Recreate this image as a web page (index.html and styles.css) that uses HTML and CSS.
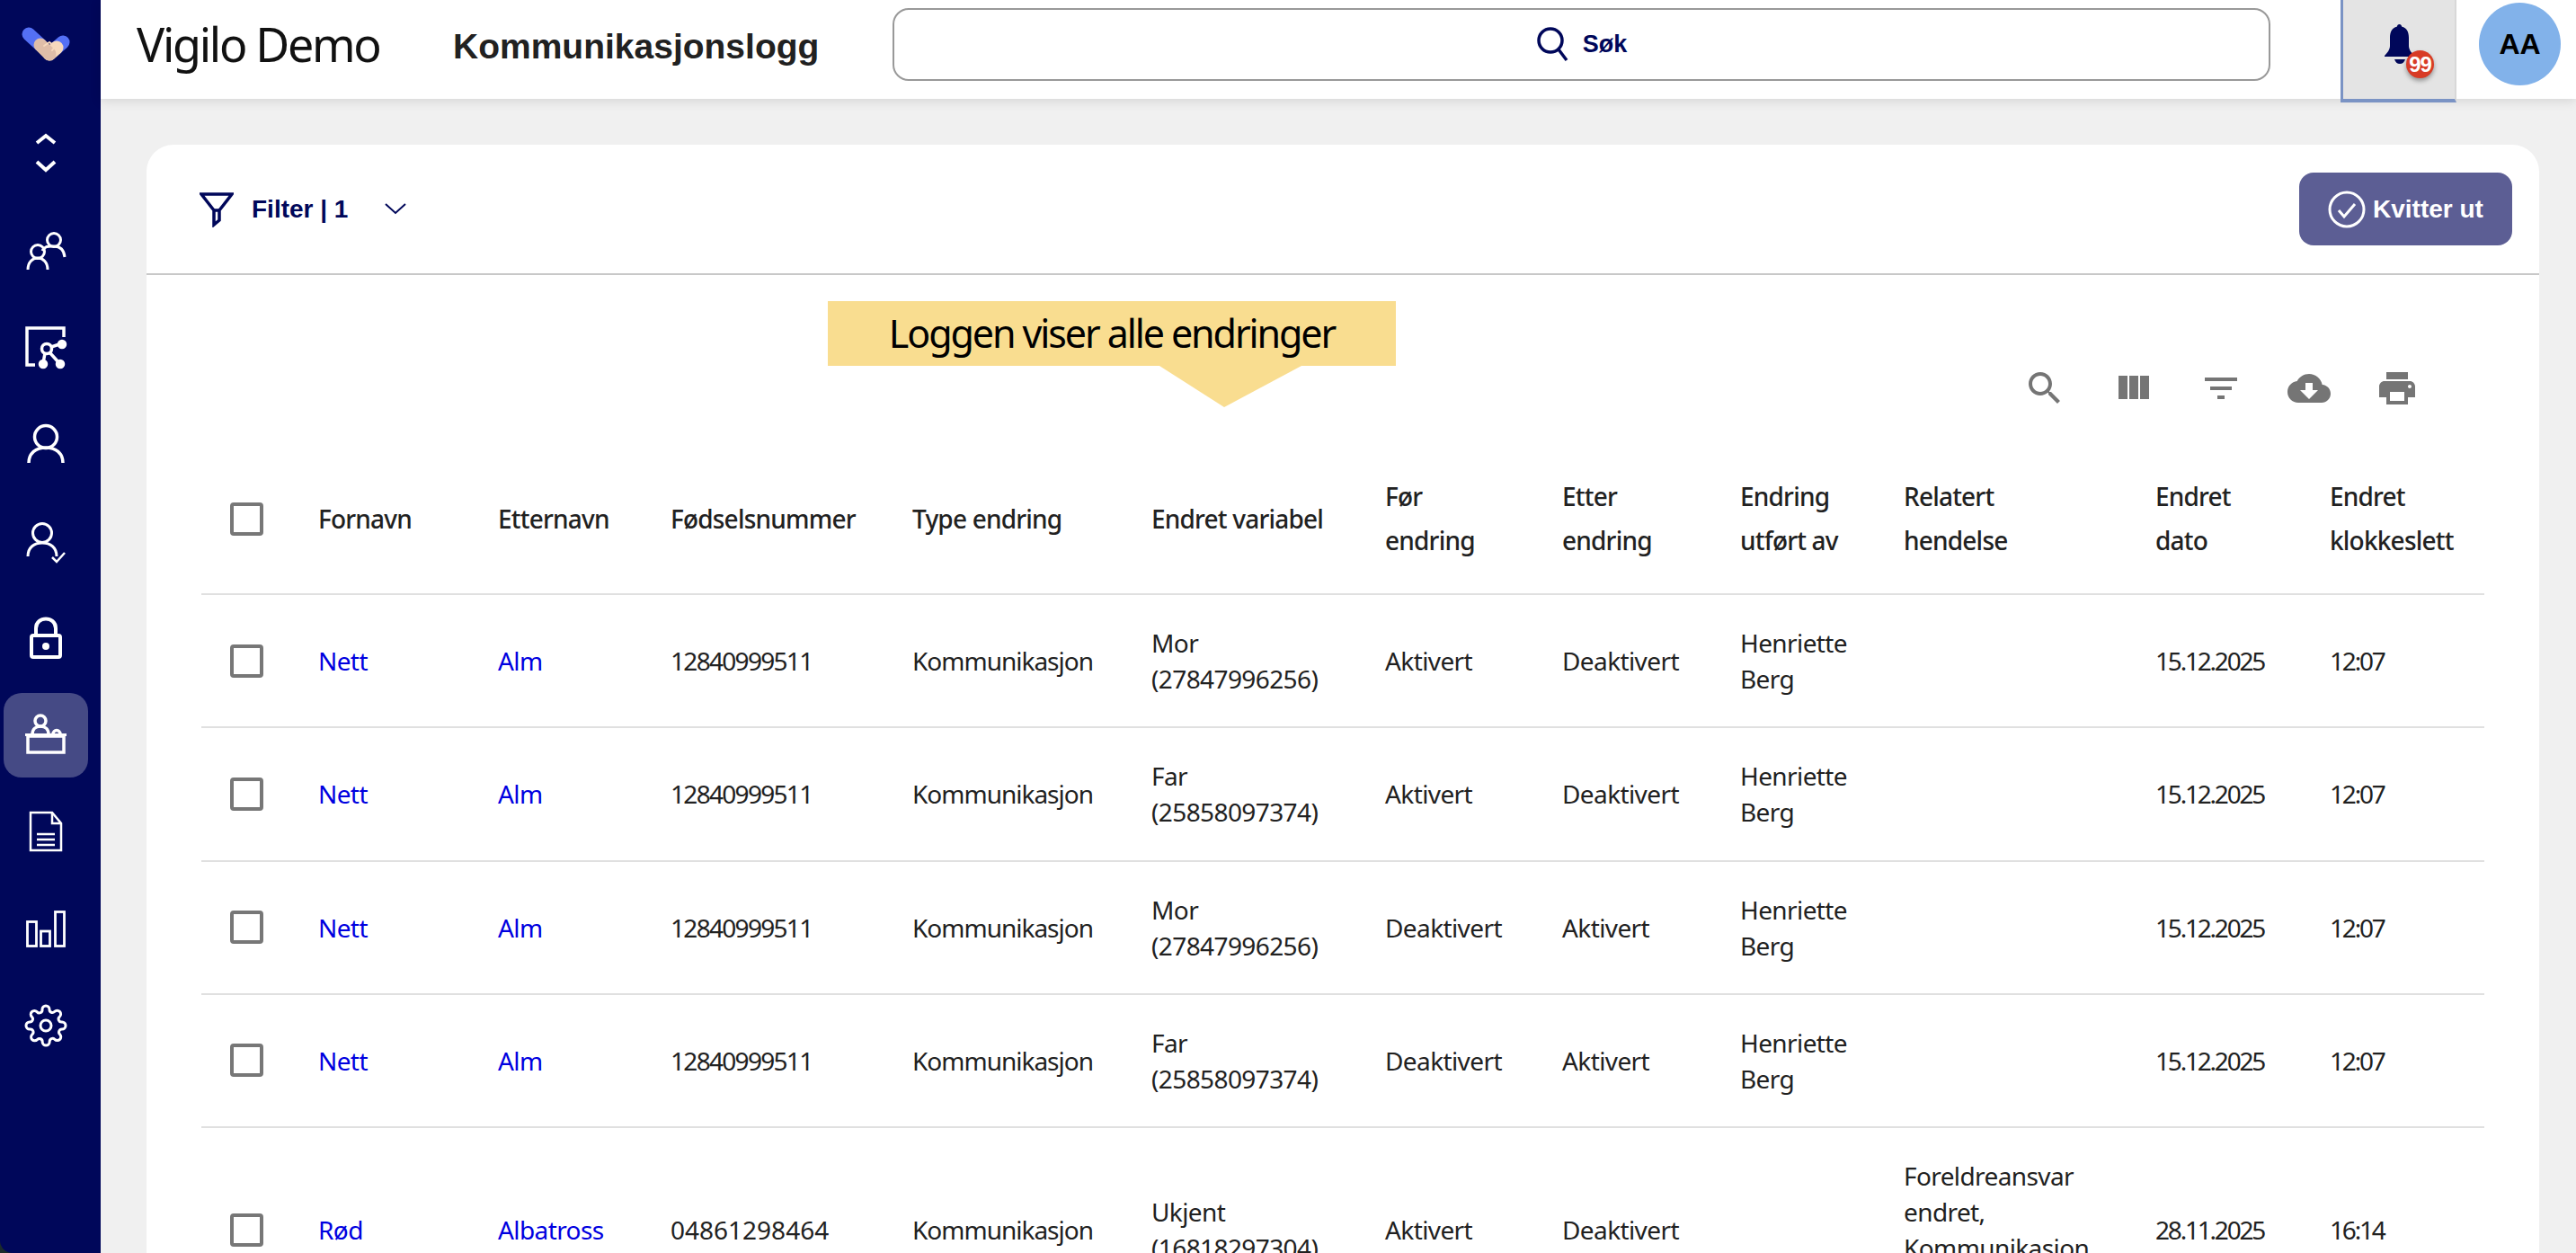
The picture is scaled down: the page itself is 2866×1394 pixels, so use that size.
FILE: index.html
```html
<!DOCTYPE html>
<html lang="en">
<head>
    <meta charset="UTF-8">
    <title>Kommunikasjonslogg</title>
    <link rel="stylesheet" href="styles.css">
</head>
<body>

<div class="app">
    <aside class="sidebar">
        <div class="logo">
            <svg width="58" height="44" viewBox="0 0 58 44" fill="none" stroke-linecap="round">
                <path d="M39 25L46 19" stroke="#5470f5" stroke-width="15"/>
                <path d="M31 32L39 25" stroke="#f7d9bd" stroke-width="15"/>
                <path d="M8 10L21 22" stroke="#5470f5" stroke-width="15"/>
                <path d="M21 22L31 32" stroke="#dfbda8" stroke-width="15"/>
                <path d="M25 23l6-4 6 5-3 4" stroke="#f7d9bd" stroke-width="2"/>
            </svg>
        </div>
        <nav class="nav">
            <div class="nav-item">
                <svg class="icon" viewBox="0 0 48 48" stroke-width="4"><path d="M14 11l10-8 10 8M14 32l10 9 10-9"/></svg>
            </div>
            <div class="nav-item">
                <svg class="icon" viewBox="0 0 48 48" stroke-width="3"><circle cx="33" cy="11" r="7.5"/><path d="M20 23c3-6 8-5 13-5s11 2 12 12"/><circle cx="15" cy="24" r="7.5"/><path d="M4 44c0-8 5-13 11-13s11 5 11 13"/></svg>
            </div>
            <div class="nav-item">
                <svg class="icon" viewBox="0 0 48 48" stroke-width="3.5"><path d="M12 43H3V2h41v10"/><circle cx="25" cy="25" r="5.500"/><path d="M30 23l12-4M29 30l10 11M23 30l-2 11"/><circle cx="42" cy="20" r="3.500" fill="#fff"/><circle cx="40" cy="42" r="3.500" fill="#fff"/><circle cx="21" cy="42" r="3.500" fill="#fff"/></svg>
            </div>
            <div class="nav-item">
                <svg class="icon" viewBox="0 0 48 48" stroke-width="3.5"><circle cx="24" cy="15" r="12.5"/><path d="M5 44c0-11 8-17 19-17s19 6 19 17"/></svg>
            </div>
            <div class="nav-item">
                <svg class="icon" viewBox="0 0 48 48" stroke-width="3"><circle cx="20" cy="14" r="10.5"/><path d="M4 40c0-10 7-15 16-15s16 5 16 15"/><path d="M31 41l5 5 9-10" stroke-width="2.500"/></svg>
            </div>
            <div class="nav-item">
                <svg class="icon" viewBox="0 0 48 48" stroke-width="4"><path d="M13 21v-8c0-14 22-14 22 0v8"/><rect x="8" y="21" width="32" height="24" rx="2"/><circle cx="24" cy="33" r="4" fill="#fff" stroke="none"/></svg>
            </div>
            <div class="nav-item nav-active">
                <svg class="icon" viewBox="0 0 48 48" stroke-width="3.5"><circle cx="18" cy="8" r="6"/><path d="M9 23c0-6 4-9 9-9s9 3 9 9M32 23c0-6 8-6 8 0"/><path d="M1 22h46v3H1z" fill="#fff" stroke="none"/><path d="M4 25h40v18H4z"/></svg>
            </div>
            <div class="nav-item">
                <svg class="icon" viewBox="0 0 48 48" stroke-width="2.500"><path d="M7 2h24l10 12v30H7z"/><path d="M31 2v12h10"/><path d="M14 26h20M14 32h20M14 38h20"/></svg>
            </div>
            <div class="nav-item">
                <svg class="icon" viewBox="0 0 48 48" stroke-width="2.800"><rect x="3.500" y="15.500" width="10" height="27"/><rect x="18.500" y="26" width="10" height="16.500"/><rect x="34.500" y="4.500" width="10" height="38"/></svg>
            </div>
            <div class="nav-item">
                <svg class="icon" viewBox="0 0 24 24" stroke-width="1.500"><circle cx="12" cy="12" r="3"/><path d="M19.4 15a1.65 1.65 0 0 0 .33 1.82l.06.06a2 2 0 1 1-2.83 2.83l-.06-.06a1.65 1.65 0 0 0-2.82 1.17V21a2 2 0 1 1-4 0v-.09a1.65 1.65 0 0 0-2.82-1.17l-.06.06a2 2 0 1 1-2.83-2.83l.06-.06A1.65 1.65 0 0 0 3.26 14H3a2 2 0 1 1 0-4h.09a1.65 1.65 0 0 0 1.17-2.82l-.06-.06a2 2 0 1 1 2.83-2.83l.06.06A1.65 1.65 0 0 0 10 3.09V3a2 2 0 1 1 4 0v.09a1.65 1.65 0 0 0 2.82 1.17l.06-.06a2 2 0 1 1 2.83 2.83l-.06.06A1.65 1.65 0 0 0 20.91 10H21a2 2 0 1 1 0 4h-.09a1.65 1.65 0 0 0-1.51 1z"/></svg>
            </div>
        </nav>
    </aside>

    <div class="main">
        <header class="topbar">
            <div class="brand">Vigilo Demo</div>
            <div class="page-title">Kommunikasjonslogg</div>
            <div class="search">
                <svg width="38" height="40" viewBox="0 0 38 40" fill="none" stroke="#00075a" stroke-width="3.5"><circle cx="16" cy="16" r="13"/><path d="M25 26l9 12"/></svg>
                <span>Søk</span>
            </div>
            <div class="bell-box">
                <svg width="33" height="45" viewBox="0 0 33 45" fill="#00075a"><path d="M16.500 0c1.500 0 2.500 1 2.500 2.500C25 4 27 9 27 15v9c0 4 3 8 6 11v1H0v-1c3-3 6-7 6-11v-9C6 9 8 4 14 2.500 14 1 15 0 16.500 0z"/><path d="M11 39h12c-1 3-3 5-6 5s-5-2-6-5z"/></svg>
                <span class="badge">99</span>
            </div>
            <div class="avatar">AA</div>
        </header>

        <div class="content">
            <section class="card">
                <div class="card-head">
                    <div class="filter">
                        <svg width="38" height="40" viewBox="0 0 38 40" fill="none" stroke="#00075a" stroke-width="3.500"><path d="M2 3h34L22 21v11l-6 5V21z"/><path d="M16 21h6"/></svg>
                        <span class="filter-label">Filter | 1</span>
                        <svg width="24" height="13" viewBox="0 0 24 13" fill="none" stroke="#00075a" stroke-width="2"><path d="M1 1l11 10L23 1"/></svg>
                    </div>
                    <button class="checkout">
                        <svg width="42" height="42" viewBox="0 0 42 42" fill="none" stroke="#fff" stroke-width="3"><circle cx="21" cy="21" r="19"/><path d="M12 22l6 7 12-14"/></svg>
                        Kvitter ut
                    </button>
                </div>

                <div class="tools">
                    <svg class="tool" viewBox="0 0 24 24"><path d="M15.5 14h-.79l-.28-.27C15.41 12.59 16 11.11 16 9.5 16 5.910 13.090 3 9.500 3S3 5.910 3 9.500 5.910 16 9.500 16c1.610 0 3.090-.59 4.230-1.570l.27.28v.79l5 4.990L20.490 19l-4.990-5zm-6 0C7.010 14 5 11.990 5 9.500S7.010 5 9.500 5 14 7.010 14 9.500 11.990 14 9.500 14z"/></svg>
                    <svg class="tool" viewBox="0 0 24 24"><path d="M10 18h5V5h-5v13zm-6 0h5V5H4v13zM16 5v13h5V5h-5z"/></svg>
                    <svg class="tool" viewBox="0 0 24 24"><path d="M10 18h4v-2h-4v2zM3 6v2h18V6H3zm3 7h12v-2H6v2z"/></svg>
                    <svg class="tool" viewBox="0 0 24 24"><path d="M19.350 10.040C18.670 6.590 15.640 4 12 4 9.110 4 6.600 5.640 5.350 8.040 2.340 8.360 0 10.910 0 14c0 3.310 2.690 6 6 6h13c2.760 0 5-2.240 5-5 0-2.640-2.050-4.780-4.650-4.960zM17 13l-5 5-5-5h3V9h4v4h3z"/></svg>
                    <svg class="tool" viewBox="0 0 24 24"><path d="M19 8H5c-1.660 0-3 1.340-3 3v6h4v4h12v-4h4v-6c0-1.660-1.340-3-3-3zm-3 11H8v-5h8v5zm3-7c-.55 0-1-.45-1-1s.45-1 1-1 1 .45 1 1-.45 1-1 1zm-1-9H6v4h12V3z"/></svg>
                </div>

                <table class="log">
                    <colgroup>
                        <col class="c-check"><col class="c-first"><col class="c-last"><col class="c-ssn"><col class="c-type"><col class="c-var"><col class="c-before"><col class="c-after"><col class="c-by"><col class="c-event"><col class="c-date"><col class="c-time">
                    </colgroup>
                    <thead>
                        <tr>
                            <th><span class="box"></span></th>
                            <th>Fornavn</th>
                            <th>Etternavn</th>
                            <th>Fødselsnummer</th>
                            <th>Type endring</th>
                            <th>Endret variabel</th>
                            <th>Før<br>endring</th>
                            <th>Etter<br>endring</th>
                            <th>Endring<br>utført av</th>
                            <th>Relatert<br>hendelse</th>
                            <th>Endret<br>dato</th>
                            <th>Endret<br>klokkeslett</th>
                        </tr>
                    </thead>
                    <tbody>
                        <tr>
                            <td><span class="box"></span></td>
                            <td><a href="#">Nett</a></td>
                            <td><a href="#">Alm</a></td>
                            <td class="tight">12840999511</td>
                            <td class="kind">Kommunikasjon</td>
                            <td>Mor<br>(27847996256)</td>
                            <td>Aktivert</td>
                            <td>Deaktivert</td>
                            <td>Henriette<br>Berg</td>
                            <td></td>
                            <td class="date">15.12.2025</td>
                            <td class="date">12:07</td>
                        </tr>
                        <tr>
                            <td><span class="box"></span></td>
                            <td><a href="#">Nett</a></td>
                            <td><a href="#">Alm</a></td>
                            <td class="tight">12840999511</td>
                            <td class="kind">Kommunikasjon</td>
                            <td>Far<br>(25858097374)</td>
                            <td>Aktivert</td>
                            <td>Deaktivert</td>
                            <td>Henriette<br>Berg</td>
                            <td></td>
                            <td class="date">15.12.2025</td>
                            <td class="date">12:07</td>
                        </tr>
                        <tr>
                            <td><span class="box"></span></td>
                            <td><a href="#">Nett</a></td>
                            <td><a href="#">Alm</a></td>
                            <td class="tight">12840999511</td>
                            <td class="kind">Kommunikasjon</td>
                            <td>Mor<br>(27847996256)</td>
                            <td>Deaktivert</td>
                            <td>Aktivert</td>
                            <td>Henriette<br>Berg</td>
                            <td></td>
                            <td class="date">15.12.2025</td>
                            <td class="date">12:07</td>
                        </tr>
                        <tr>
                            <td><span class="box"></span></td>
                            <td><a href="#">Nett</a></td>
                            <td><a href="#">Alm</a></td>
                            <td class="tight">12840999511</td>
                            <td class="kind">Kommunikasjon</td>
                            <td>Far<br>(25858097374)</td>
                            <td>Deaktivert</td>
                            <td>Aktivert</td>
                            <td>Henriette<br>Berg</td>
                            <td></td>
                            <td class="date">15.12.2025</td>
                            <td class="date">12:07</td>
                        </tr>
                        <tr>
                            <td><span class="box"></span></td>
                            <td><a href="#">Rød</a></td>
                            <td><a href="#">Albatross</a></td>
                            <td class="plain">04861298464</td>
                            <td class="kind">Kommunikasjon</td>
                            <td>Ukjent<br>(16818297304)</td>
                            <td>Aktivert</td>
                            <td>Deaktivert</td>
                            <td></td>
                            <td>Foreldreansvar<br>endret,<br>Kommunikasjon<br>endret</td>
                            <td class="date">28.11.2025</td>
                            <td class="date">16:14</td>
                        </tr>
                    </tbody>
                </table>

                <div class="callout">Loggen viser alle endringer</div>
            </section>
        </div>
    </div>
</div>

</body>
</html>
```

FILE: styles.css
```css
* {
    box-sizing: border-box;
}
html, body {
    height: 100%;
    margin: 0;
    overflow: hidden;
}
body {
    font-family: "Noto Sans", sans-serif;
    color: #212121;
    background-color: #f0f0f0;
}
.app {
    display: flex;
    height: 100vh;
    background-color: #1c2b2b;
}

/* sidebar */
.sidebar {
    width: 112px;
    flex-shrink: 0;
    background-color: #00075a;
    padding: 0 4px;
    border-bottom-left-radius: 14px;
}
.logo {
    height: 125px;
    padding: 28px 0 0 20px;
}
.nav {
    display: flex;
    flex-direction: column;
    gap: 13.7px;
    margin-right: 10px;
}
.nav-item {
    height: 94px;
    display: flex;
    align-items: center;
    justify-content: center;
    border-radius: 20px;
}
.nav-active {
    background-color: #454a85;
}
.icon {
    width: 48px;
    height: 48px;
    fill: none;
    stroke: #fff;
}

/* top bar */
.main {
    flex: 1;
    min-width: 0;
    display: flex;
    flex-direction: column;
    background-color: #f0f0f0;
}
.topbar {
    height: 110px;
    flex-shrink: 0;
    display: flex;
    align-items: center;
    background-color: #fff;
    box-shadow: 0 2px 12px rgba(0, 0, 0, 0.12);
    padding-left: 40px;
    position: relative;
}
.brand {
    width: 352px;
    margin-top: -14px;
    font-size: 52px;
    letter-spacing: -2.3px;
    color: #111;
}
.page-title {
    width: 489px;
    margin-top: -6px;
    font-family: "Liberation Sans", sans-serif;
    font-size: 39px;
    font-weight: bold;
}
.search {
    width: 1533px;
    height: 81px;
    margin-top: -12px;
    display: flex;
    align-items: center;
    justify-content: center;
    gap: 14px;
    border: 2px solid #999;
    border-radius: 18px;
    font-family: "Liberation Sans", sans-serif;
    font-size: 27px;
    font-weight: bold;
    color: #00075a;
}
.bell-box {
    width: 129px;
    height: 114px;
    margin-left: 78px;
    align-self: flex-start;
    display: flex;
    justify-content: center;
    padding-top: 27px;
    background-color: #e4e4e4;
    border-left: 3px solid #7a93c4;
    border-right: 2px solid #d8d8d8;
    border-bottom: 4px solid #7a93c4;
    position: relative;
}
.badge {
    position: absolute;
    left: 70px;
    top: 56px;
    width: 31px;
    height: 31px;
    border-radius: 50%;
    background-color: #d83b26;
    color: #fff;
    font-family: "Liberation Sans", sans-serif;
    font-size: 24px;
    font-weight: bold;
    letter-spacing: -1px;
    line-height: 31px;
    text-align: center;
    box-shadow: 0 3px 5px rgba(0, 0, 0, 0.35);
}
.avatar {
    width: 91px;
    height: 92px;
    margin-left: 25px;
    margin-top: -12px;
    border-radius: 50%;
    background-color: #82b2ea;
    color: #000;
    display: flex;
    align-items: center;
    justify-content: center;
    font-family: "Liberation Sans", sans-serif;
    font-size: 32px;
    font-weight: bold;
}

/* card */
.content {
    flex: 1;
    padding: 51px 41px 0 51px;
    min-height: 0;
}
.card {
    background-color: #fff;
    border-radius: 30px 30px 0 0;
    height: 1400px;
    position: relative;
}
.card-head {
    height: 145px;
    display: flex;
    align-items: center;
    justify-content: space-between;
    padding: 0 30px 0 59px;
    border-bottom: 2px solid #c8c8c8;
}
.filter {
    display: flex;
    align-items: center;
}
.filter-label {
    margin: 0 41px 0 20px;
    font-family: "Liberation Sans", sans-serif;
    font-size: 28px;
    font-weight: bold;
    color: #00075a;
}
.checkout {
    width: 237px;
    height: 81px;
    display: flex;
    align-items: center;
    justify-content: center;
    gap: 8px;
    border: none;
    border-radius: 16px;
    background-color: #5c5e94;
    color: #fff;
    font-family: "Liberation Sans", sans-serif;
    font-size: 28px;
    font-weight: bold;
}

/* table toolbar */
.tools {
    display: flex;
    justify-content: flex-end;
    gap: 50px;
    margin-top: 102px;
    padding-right: 134px;
}
.tool {
    width: 48px;
    height: 48px;
    fill: #757575;
}

/* table */
.log {
    width: 2540px;
    margin: 38px 0 0 61px;
    table-layout: fixed;
    border-collapse: collapse;
    font-size: 28px;
    line-height: 40px;
    letter-spacing: -0.6px;
}
.c-check { width: 114px; }
.c-first { width: 200px; }
.c-last { width: 192px; }
.c-ssn { width: 269px; }
.c-type { width: 266px; }
.c-var { width: 260px; }
.c-before { width: 197px; }
.c-after { width: 198px; }
.c-by { width: 182px; }
.c-event { width: 280px; }
.c-date { width: 194px; }
.c-time { width: 188px; }
.log th {
    padding: 34px 16px;
    font-weight: 500;
    line-height: 49px;
    text-align: left;
    letter-spacing: -0.8px;
    border-bottom: 2px solid #e0e0e0;
}
.log td {
    height: 148.25px;
    padding: 33px 16px;
    border-bottom: 2px solid #e0e0e0;
}
.log th:first-child,
.log td:first-child {
    padding-left: 32px;
}
.log .tight {
    letter-spacing: -1.7px;
}
.log .date {
    letter-spacing: -2.2px;
}
.log .kind {
    letter-spacing: -1px;
}
.log .plain {
    letter-spacing: 0;
}
.log a {
    color: #0000e0;
    text-decoration: none;
}
.box {
    display: block;
    width: 37px;
    height: 37px;
    border: 4px solid #777;
    border-radius: 4px;
}

/* yellow hint over the table */
.callout {
    position: absolute;
    left: 758px;
    top: 174px;
    width: 632px;
    height: 72px;
    background-color: #f9dd90;
    color: #000;
    font-size: 43px;
    letter-spacing: -2.1px;
    line-height: 72px;
    text-align: center;
}
.callout::after {
    content: "";
    position: absolute;
    left: 369px;
    top: 72px;
    border-style: solid;
    border-width: 46px 86px 0 72px;
    border-color: #f9dd90 transparent transparent transparent;
}
```
